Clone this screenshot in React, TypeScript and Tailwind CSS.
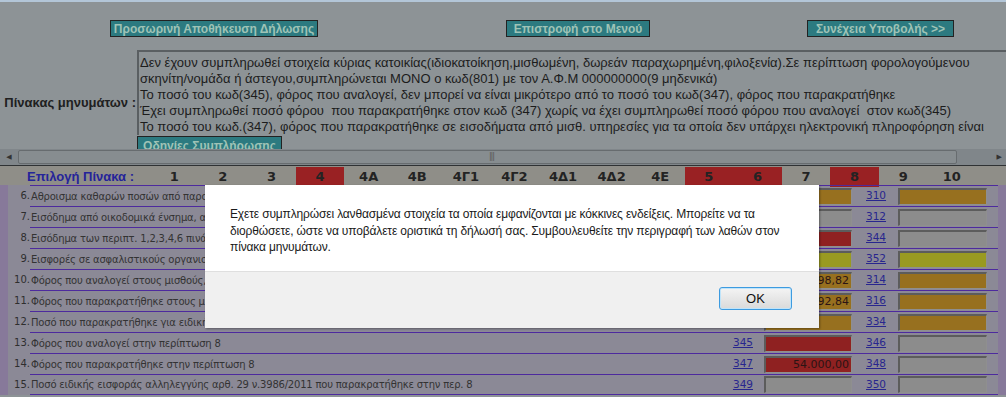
import React from 'react';

type Tone = 'orange' | 'gray' | 'red' | 'yellow';

interface Row {
  n: number;
  label: string;
  c1: string;
  v1?: string;
  t1: Tone;
  c2: string;
  t2: Tone;
}

const tabs = ['1', '2', '3', '4', '4Α', '4Β', '4Γ1', '4Γ2', '4Δ1', '4Δ2', '4Ε', '5', '6', '7', '8', '9', '10'];
const redTabs = ['4', '5', '6', '8'];

const messages = [
  'Δεν έχουν συμπληρωθεί στοιχεία κύριας κατοικίας(ιδιοκατοίκηση,μισθωμένη, δωρεάν παραχωρημένη,φιλοξενία).Σε περίπτωση φορολογούμενου',
  'σκηνίτη/νομάδα ή άστεγου,συμπληρώνεται ΜΟΝΟ ο κωδ(801) με τον Α.Φ.Μ 000000000(9 μηδενικά)',
  'Το ποσό του κωδ(345), φόρος που αναλογεί, δεν μπορεί να είναι μικρότερο από το ποσό του κωδ(347), φόρος που παρακρατήθηκε',
  'Έχει συμπληρωθεί ποσό φόρου  που παρακρατήθηκε στον κωδ (347) χωρίς να έχει συμπληρωθεί ποσό φόρου που αναλογεί  στον κωδ(345)',
  'Το ποσό του κωδ.(347), φόρος που παρακρατήθηκε σε εισοδήματα από μισθ. υπηρεσίες για τα οποία δεν υπάρχει ηλεκτρονική πληροφόρηση είναι',
];

const rows: Row[] = [
  { n: 6, label: 'Αθροισμα καθαρών ποσών από παροχή μισθωτών υπηρεσιών', c1: '301', t1: 'orange', c2: '310', t2: 'orange' },
  { n: 7, label: 'Εισόδημα από οικοδομικά ένσημα, αποζημιώσεις', c1: '303', t1: 'gray', c2: '312', t2: 'gray' },
  { n: 8, label: 'Εισόδημα των περιπτ. 1,2,3,4,6 πινάκων', c1: '343', t1: 'red', c2: '344', t2: 'gray' },
  { n: 9, label: 'Εισφορές σε ασφαλιστικούς οργανισμούς', c1: '351', t1: 'yellow', c2: '352', t2: 'yellow' },
  { n: 10, label: 'Φόρος που αναλογεί στους μισθούς, συντάξεις', c1: '313', v1: '3.298,82', t1: 'orange', c2: '314', t2: 'orange' },
  { n: 11, label: 'Φόρος που παρακρατήθηκε στους μισθούς, συντάξεις', c1: '315', v1: '3.292,84', t1: 'orange', c2: '316', t2: 'orange' },
  { n: 12, label: 'Ποσό που παρακρατήθηκε για ειδική εισφορά αλληλεγγύης', c1: '333', t1: 'orange', c2: '334', t2: 'orange' },
  { n: 13, label: 'Φόρος που αναλογεί στην περίπτωση 8', c1: '345', t1: 'red', c2: '346', t2: 'gray' },
  { n: 14, label: 'Φόρος που παρακρατήθηκε στην περίπτωση 8', c1: '347', v1: '54.000,00', t1: 'red', c2: '348', t2: 'gray' },
  { n: 15, label: 'Ποσό ειδικής εισφοράς αλληλεγγύης αρθ. 29 ν.3986/2011 που παρακρατήθηκε στην περ. 8', c1: '349', t1: 'gray', c2: '350', t2: 'gray' },
];

const toneClass: Record<Tone, string> = {
  orange: 'bg-[#97701f]',
  gray: 'bg-[#8c8c8c]',
  red: 'bg-[#8f2121]',
  yellow: 'bg-[#999a21]',
};

const Box = ({ tone, value, width }: { tone: Tone; value?: string; width: string }) => (
  <div
    className={`${width} ${toneClass[tone]} h-[17px] border-t-2 border-l-2 border-[#5c5c5c] border-r border-b border-r-[#8f8f8f] border-b-[#8f8f8f] text-right pr-[2px] text-[11px] leading-[14px] text-[#2b1414]`}
  >
    {value}
  </div>
);

const TealButton = ({ label, className }: { label: string; className: string }) => (
  <div
    className={`${className} h-[17px] bg-[#2c7a80] border border-[#222] flex items-center justify-center text-[12px] font-bold text-[#9fc3b6] font-['Liberation_Sans',Arial,sans-serif] whitespace-nowrap overflow-hidden`}
  >
    {label}
  </div>
);

export default function App() {
  return (
    <div className="relative w-[1006px] h-[397px] overflow-hidden bg-[#8d9396] border-t-2 border-[#b3c6d8] font-['DejaVu_Sans',Verdana,sans-serif]">
      {/* scrolled page area */}
      <div className="h-[147px] overflow-hidden">
        <div className="flex pt-[18px]">
          <TealButton label="Προσωρινή Αποθήκευση Δήλωσης" className="ml-[110px] w-[208px]" />
          <TealButton label="Επιστροφή στο Μενού" className="ml-[188px] w-[144px]" />
          <TealButton label="Συνέχεια Υποβολής >>" className="ml-[157px] w-[147px]" />
        </div>

        <div className="flex mt-[13px]">
          <div className="w-[137px] shrink-0 flex items-center justify-end pr-[1px] text-[13px] font-bold text-[#202020] font-['Liberation_Sans',Arial,sans-serif] whitespace-nowrap">
            Πίνακας μηνυμάτων :
          </div>
          <div className="flex flex-col">
            <div className="w-[900px] h-[85px] border-t-2 border-l-2 border-[#5a5f62] pl-[1px] pt-[3px] text-[13px] leading-[16px] text-[#1c1c1c] font-['Liberation_Sans',Arial,sans-serif] overflow-hidden">
              {messages.map((m) => (
                <div key={m} className="whitespace-pre">
                  {m}
                </div>
              ))}
            </div>
            <TealButton label="Οδηγίες Συμπλήρωσης" className="mt-[1px] w-[145px] !h-[20px]" />
          </div>
        </div>
      </div>

      {/* horizontal scrollbar */}
      <div className="h-[16px] bg-[#80868a] flex items-center">
        <div className="w-[18px] flex justify-center text-[7px] text-[#333]">◀</div>
        <div className="w-[939px] h-[14px] rounded-[2px] border border-[#676c6f] bg-[#878d90] flex items-center justify-end pr-[462px]">
          <span className="text-[8px] leading-none tracking-[-1px] text-[#555]">|||</span>
        </div>
        <div className="flex-1 flex justify-end pr-[4px] text-[7px] text-[#333]">▶</div>
      </div>

      {/* tab row */}
      <div className="border-t border-[#2f3234] bg-[#8f8e88] h-[20px] grid grid-cols-[150px_repeat(17,48.6px)] items-stretch">
        <div className="pl-[27px] flex items-center text-[13px] font-bold text-[#25249a] font-['Liberation_Sans',Arial,sans-serif] whitespace-nowrap">
          Επιλογή Πίνακα :
        </div>
        {tabs.map((t) => (
          <div
            key={t}
            className={`flex items-center justify-center text-[13px] font-bold text-[#232323] ${
              redTabs.includes(t) ? 'bg-[#992123] my-[1px]' : ''
            }`}
          >
            {t}
          </div>
        ))}
      </div>

      {/* table */}
      <div className="flex bg-[#8b8996]">
        <div className="w-[8px] bg-[#87799a]" />
        <div className="flex-1 flex flex-col">
          {rows.map((r, i) => (
            <div key={r.n} className="flex h-[21px]">
              <div className="w-[22px] flex items-center justify-end text-[10px] text-[#2e2e2e]">{r.n}.</div>
              <div
                className={`flex-1 flex items-center border-t border-[#4d2a9e] ${
                  i === rows.length - 1 ? 'border-b' : ''
                }`}
              >
                <div className="flex-1 pl-[1px] text-[10px] tracking-[-0.2px] text-[#333] whitespace-nowrap overflow-hidden">
                  {r.label}
                </div>
                <div className="w-[60px] text-right text-[10.5px] text-[#28268e] underline">{r.c1}</div>
                <div className="ml-[11px]">
                  <Box tone={r.t1} value={r.v1} width="w-[88px]" />
                </div>
                <div className="ml-[14px] w-[32px] text-[10.5px] text-[#28268e] underline">{r.c2}</div>
                <Box tone={r.t2} width="w-[89px]" />
                <div className="w-[11px]" />
              </div>
            </div>
          ))}
        </div>
        <div className="w-[8px] bg-[#87799a]" />
      </div>

      {/* alert dialog */}
      <div className="absolute left-[205px] top-[183px] w-[614px] h-[143px] flex flex-col bg-white shadow-[1px_1px_2px_rgba(0,0,0,0.35)] font-['Liberation_Sans',Arial,sans-serif]">
        <div className="h-[86px] pl-[25px] pt-[21px] text-[12px] leading-[16.5px] tracking-[-0.15px] text-[#1a1a1a]">
          Εχετε συμπληρώσει λανθασμένα στοιχεία τα οποία εμφανίζονται με κόκκινες ενδείξεις. Μπορείτε να τα
          <br />
          διορθώσετε, ώστε να υποβάλετε οριστικά τη δήλωσή σας. Συμβουλευθείτε την περιγραφή των λαθών στον
          <br />
          πίνακα μηνυμάτων.
        </div>
        <div className="flex-1 bg-[#f0f0f0] border-t border-[#dfdfdf] flex justify-end items-start pt-[15px] pr-[27px]">
          <button className="w-[73px] h-[23px] rounded-[3px] border border-[#3d9be0] bg-gradient-to-b from-[#f4f4f4] to-[#dadada] shadow-[inset_0_0_0_1px_#bfe4fa] text-[13px] text-[#111]">
            OK
          </button>
        </div>
      </div>
    </div>
  );
}
